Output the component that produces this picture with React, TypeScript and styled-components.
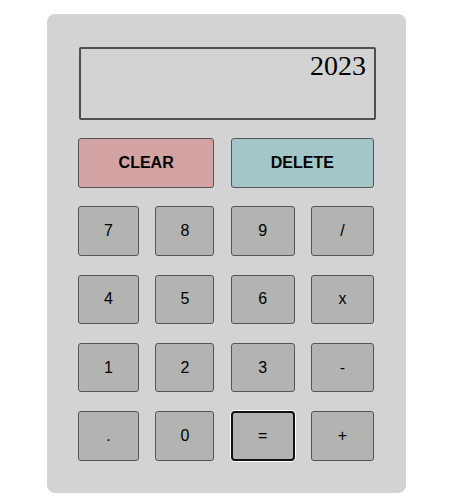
import React from "react";
import styled, { createGlobalStyle } from "styled-components";

const Global = createGlobalStyle`
  html, body { margin: 0; padding: 0; background: #ffffff; }
  body { padding-left: 2px; font-family: "Liberation Sans", Arial, sans-serif; }
`;

const Card = styled.div`
  box-sizing: border-box;
  width: 359px;
  height: 479px;
  margin: 14px auto 0;
  background: #d3d3d3;
  border-radius: 8px;
  padding: 33px 31px 32px 31px;
  display: flex;
  flex-direction: column;
`;

const Display = styled.div`
  box-sizing: border-box;
  width: 297px;
  height: 73px;
  margin-left: 1px;
  border: 2px solid #4f4f4f;
  border-radius: 2px;
  padding: 1px 8px 0 0;
  text-align: right;
  font-family: "Liberation Serif", "Times New Roman", serif;
  font-size: 28px;
  line-height: 32px;
  color: #000;
`;

const Keys = styled.div`
  width: 296px;
  margin-top: 18px;
  display: grid;
  grid-template-columns: 61px 59px 64px 63px;
  justify-content: space-between;
  grid-auto-rows: 49.5px;
  row-gap: 18.8px;
`;

type KeyProps = { $tone?: "clear" | "delete" | "num"; $span?: number; $focused?: boolean };

const Key = styled.button<KeyProps>`
  box-sizing: border-box;
  margin: 0;
  padding: 0;
  grid-column: span ${(p) => p.$span ?? 1};
  border: ${(p) => (p.$focused ? "2px solid #111" : "1px solid #555")};
  box-shadow: ${(p) => (p.$focused ? "0 0 0 1px #ffffff" : "none")};
  border-radius: ${(p) => (p.$focused ? "4px" : "3px")};
  background: ${(p) =>
    p.$tone === "clear" ? "#d3a3a3" : p.$tone === "delete" ? "#a3c6c8" : "#b3b3b1"};
  font-family: "Liberation Sans", Arial, sans-serif;
  font-size: 16px;
  font-weight: ${(p) => (p.$tone === "num" ? 400 : 700)};
  color: #000;
  display: flex;
  align-items: center;
  justify-content: center;
  cursor: pointer;
`;

const keys = ["7", "8", "9", "/", "4", "5", "6", "x", "1", "2", "3", "-", ".", "0", "=", "+"];

export default function App() {
  return (
    <>
      <Global />
      <Card>
        <Display>2023</Display>
        <Keys>
          <Key $tone="clear" $span={2}>CLEAR</Key>
          <Key $tone="delete" $span={2}>DELETE</Key>
          {keys.map((k) => (
            <Key key={k} $tone="num" $focused={k === "="}>
              {k}
            </Key>
          ))}
        </Keys>
      </Card>
    </>
  );
}
